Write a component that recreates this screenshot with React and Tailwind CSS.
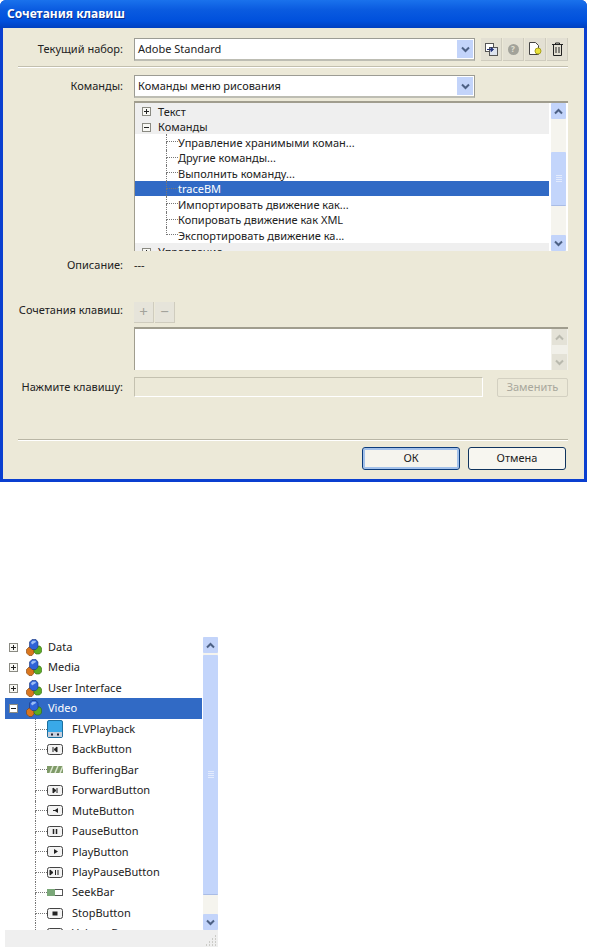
import React from 'react';

const commandRows = ['Управление хранимыми коман...', 'Другие команды...', 'Выполнить команду...', 'traceBM', 'Импортировать движение как...', 'Копировать движение как XML', 'Экспортировать движение ка...'];
const videoRows = ['BackButton', 'BufferingBar', 'ForwardButton', 'MuteButton', 'PauseButton', 'PlayButton', 'PlayPauseButton', 'SeekBar', 'StopButton'];

function Chevron({ up = false, color = '#4d6185' }) {
  return (
    <svg width="9" height="7" viewBox="0 0 9 7" aria-hidden="true">
      <path d={up ? 'M1 5.5 4.5 2 8 5.5' : 'M1 1.5 4.5 5 8 1.5'} fill="none" stroke={color} strokeWidth="2" />
    </svg>
  );
}

function ComboBox({ value, width }) {
  return (
    <div className={`flex h-[23px] items-center justify-between border border-b-2 border-[#9c9c94] border-b-[#bdbdb3] bg-white pl-[3px] pr-px ${width}`}>
      <span className="text-[#222]">{value}</span>
      <span className="flex h-[18px] w-[16px] items-center justify-center bg-[#c3d4fa]">
        <Chevron />
      </span>
    </div>
  );
}

function Scrollbar({ thumbTop, thumbHeight, buttonHeight, width = 'w-[15px]' }) {
  return (
    <div className={`flex h-full shrink-0 flex-col bg-[#f5f4ee] ${width}`}>
      <span className={`flex shrink-0 items-center justify-center rounded-[1px] bg-[#c3d4fa] ${buttonHeight}`}>
        <Chevron up />
      </span>
      <div className={`shrink-0 ${thumbTop}`} />
      <div className={`flex shrink-0 flex-col items-center justify-center gap-px rounded-[1px] border-b border-[#a9bce6] bg-[#c3d5fb] ${thumbHeight}`}>
        <span className="h-px w-[6px] bg-[#e3ebfd]" />
        <span className="h-px w-[6px] bg-[#e3ebfd]" />
        <span className="h-px w-[6px] bg-[#e3ebfd]" />
        <span className="h-px w-[6px] bg-[#e3ebfd]" />
      </div>
      <div className="flex-1" />
      <span className={`flex shrink-0 items-center justify-center rounded-[1px] bg-[#c3d4fa] ${buttonHeight}`}>
        <Chevron />
      </span>
    </div>
  );
}

function Expander({ open = false, inverted = false }) {
  return (
    <svg width="9" height="9" viewBox="0 0 9 9" aria-hidden="true" className="shrink-0">
      <rect x="0.5" y="0.5" width="8" height="8" fill={inverted ? '#fff' : '#f7f7f3'} stroke="#8a8a82" />
      <path d={open ? 'M2 4.5h5' : 'M2 4.5h5M4.5 2v5'} stroke="#222" />
    </svg>
  );
}

// dotted elbow of the tree; last row stops at the middle
function Elbow({ width, last = false }) {
  return (
    <div className={`flex h-full shrink-0 flex-col ${width}`}>
      <div className="flex-1 border-b border-l border-dotted border-[#777]" />
      <div className={`flex-1 border-l border-dotted ${last ? 'border-transparent' : 'border-[#777]'}`} />
    </div>
  );
}

function ClusterIcon() {
  return (
    <svg width="16" height="17" viewBox="0 0 16 17" aria-hidden="true" className="shrink-0">
      <path d="M0.500 10.500 3 8h3l2 2v4l-2 2.500H3L0.500 14z" fill="#d9761e" stroke="#7c3f0d" strokeWidth=".6" />
      <path d="M8 9.500 10.500 7H14l1.500 2v4L13.500 15H10l-2-2z" fill="#5cab23" stroke="#2f6a0e" strokeWidth=".6" />
      <path d="M3.500 3 6 .5h4L12 3v5l-2 2.500H6L3.500 8z" fill="#2f63d8" stroke="#17357e" strokeWidth=".6" />
      <path d="M5 3.500 6.500 1.800h3L10 3 6 5.500z" fill="#9bbcf5" />
    </svg>
  );
}

function FlvIcon() {
  return (
    <svg width="16" height="18" viewBox="0 0 16 18" aria-hidden="true" className="shrink-0">
      <rect x="0.500" y="0.500" width="15" height="17" rx="1.500" fill="#39a9e8" stroke="#1d6f9f" />
      <rect x="1" y="12" width="14" height="5" fill="#c7cfdc" />
      <rect x="4" y="13.500" width="2" height="2" fill="#223" />
      <rect x="10" y="13.500" width="2" height="2" fill="#223" />
    </svg>
  );
}

function WidgetIcon({ name }) {
  const glyph = {
    BackButton: <path d="M6 4v5M10 4 7 6.500 10 9z" stroke="#222" fill="#222" />,
    ForwardButton: <path d="M10 4v5M6 4l3 2.500L6 9z" stroke="#222" fill="#222" />,
    MuteButton: <path d="M6 6h2l3-2v5L8 7H6z" fill="#222" />,
    PauseButton: <path d="M6.500 4v5M9.500 4v5" stroke="#222" strokeWidth="1.500" />,
    PlayButton: <path d="M7 4l4 2.500L7 9z" fill="#222" />,
    PlayPauseButton: <path d="M3 4l3 2.500L3 9zM8.500 4v5M11 4v5" fill="#222" stroke="#222" />,
    StopButton: <rect x="5.500" y="4.500" width="5" height="4" fill="#222" />,
  }[name];
  if (name === 'BufferingBar') {
    return (
      <svg width="16" height="13" viewBox="0 0 16 13" aria-hidden="true" className="shrink-0">
        <rect x="0" y="3" width="16" height="7" fill="#7f9a68" />
        <path d="M3 10 6 3M8 10l3-7M13 10l3-7" stroke="#dbe7d0" strokeWidth="1.500" />
      </svg>
    );
  }
  if (name === 'SeekBar') {
    return (
      <svg width="16" height="13" viewBox="0 0 16 13" aria-hidden="true" className="shrink-0">
        <rect x="0.500" y="3.500" width="15" height="6" fill="#fff" stroke="#555" />
        <rect x="0" y="3" width="8" height="7" fill="#7aa778" />
      </svg>
    );
  }
  return (
    <svg width="16" height="13" viewBox="0 0 16 13" aria-hidden="true" className="shrink-0">
      <rect x="0.500" y="1.500" width="15" height="10" rx="2" fill="#f3f3f3" stroke="#444" />
      {glyph}
    </svg>
  );
}

function ToolButton({ children }) {
  return <span className="flex h-[23px] w-[21px] items-center justify-center bg-[#e3e0d3] border-b border-r border-[#cfccbe]">{children}</span>;
}

function SmallButton({ children }) {
  return <span className="flex h-[21px] w-[20px] items-center justify-center border-b border-r border-[#cfccbe] bg-[#e6e4da] text-[15px] leading-none text-[#a3a39b]">{children}</span>;
}

function FormRow({ label, className = '', labelClass = '', children }) {
  return (
    <div className={`flex items-center ${className}`}>
      <span className={`w-[120px] shrink-0 text-right text-[#222] ${labelClass}`}>{label}</span>
      <div className="ml-[11px] flex min-w-0 flex-1 items-center">{children}</div>
    </div>
  );
}

function ShortcutsDialog() {
  return (
    <div className="w-[587px] overflow-hidden rounded-t-[6px] bg-[#0a3fd0]">
      <div className="flex h-[28px] items-center bg-[linear-gradient(to_bottom,#1a72ec_0%,#0a5be0_35%,#0050dc_75%,#0040c0_100%)] pl-[7px] text-[12px] font-bold text-white [text-shadow:1px_1px_#0a2f90]">
        Сочетания клавиш
      </div>
      <div className="mx-[3px] mb-[3px] bg-[#ece9d8] pb-[9px]">
        <FormRow label="Текущий набор:" className="pt-[10px]">
          <ComboBox value="Adobe Standard" width="w-[341px]" />
          <div className="ml-[6px] flex gap-px">
            <ToolButton>
              <svg width="13" height="13" viewBox="0 0 13 13" aria-hidden="true">
                <rect x="0.500" y="0.500" width="8" height="8" fill="#fff" stroke="#555" />
                <rect x="4.500" y="4.500" width="8" height="8" fill="#dde3ee" stroke="#555" />
                <path d="M2 6.500h6M6 4.500l2.500 2L6 8.500z" stroke="#23327a" fill="#23327a" />
              </svg>
            </ToolButton>
            <ToolButton>
              <span className="flex h-[11px] w-[11px] items-center justify-center rounded-full bg-[#a2a29a] text-[8px] font-bold text-[#e3e0d3]">?</span>
            </ToolButton>
            <ToolButton>
              <svg width="14" height="14" viewBox="0 0 14 14" aria-hidden="true">
                <path d="M1.500.5h6l3 3v9h-9z" fill="#fff" stroke="#444" />
                <circle cx="10" cy="9" r="3" fill="#e9e23a" stroke="#a9a21d" />
              </svg>
            </ToolButton>
            <ToolButton>
              <svg width="13" height="14" viewBox="0 0 13 14" aria-hidden="true">
                <path d="M1 2.500h11M4.500 2.500V1h4v1.500M2.500 2.500v11h8v-11M5 5v6M8 5v6" fill="none" stroke="#222" />
              </svg>
            </ToolButton>
          </div>
        </FormRow>

        <div className="ml-[15px] mt-[5px] h-[2px] w-[550px] border-b border-t border-b-white border-t-[#c2bfae]" />

        <FormRow label="Команды:" className="mt-[7px]">
          <ComboBox value="Команды меню рисования" width="w-[341px]" />
        </FormRow>

        <div className="ml-[131px] mt-[3px] flex h-[150px] w-[434px] border-l border-t-2 border-[#a09d8e] bg-white">
          <div className="min-w-0 flex-1 overflow-hidden">
            <div className="flex h-[15.5px] items-center gap-[7px] bg-[#efefef] pl-[7px] pt-[2px] text-[#222]"><Expander />Текст</div>
            <div className="flex h-[15.5px] items-center gap-[7px] bg-[#efefef] pl-[7px] pt-[2px] text-[#222]"><Expander open />Команды</div>
            {commandRows.map((row, i) => (
              <div key={row} className={`flex h-[15.5px] items-center pl-[31px] ${row === 'traceBM' ? 'bg-[#316ac5] text-white' : 'text-[#222]'}`}>
                <Elbow width="w-[12px]" last={i === commandRows.length - 1} />
                <span className="pt-[2px]">{row}</span>
              </div>
            ))}
            <div className="flex h-[15.5px] items-center gap-[7px] bg-[#efefef] pl-[7px] pt-[4px] text-[#222]"><Expander />Управление</div>
          </div>
          <div className="w-[2px] shrink-0" />
          <Scrollbar thumbTop="h-[33px]" thumbHeight="h-[54px]" buttonHeight="h-[16px]" />
          <div className="w-[2px] shrink-0" />
        </div>

        <FormRow label="Описание:" className="mt-[6px] h-[16px]">
          <span className="text-[#222]">---</span>
        </FormRow>

        <FormRow label="Сочетания клавиш:" labelClass="pb-[4px]" className="mt-[28px] h-[22px]">
          <div className="flex gap-px">
            <SmallButton>+</SmallButton>
            <SmallButton>−</SmallButton>
          </div>
        </FormRow>

        <div className="ml-[131px] mt-[4px] flex h-[43px] w-[434px] justify-end border-l border-t-2 border-[#a09d8e] bg-white">
          <div className="flex h-full w-[17px] flex-col justify-between bg-[#f1f0e9] px-px">
            <span className="flex h-[16px] items-center justify-center bg-[#e4e2d7]"><Chevron up color="#b9b9ae" /></span>
            <span className="flex h-[16px] items-center justify-center bg-[#e4e2d7]"><Chevron color="#b9b9ae" /></span>
          </div>
        </div>

        <FormRow label="Нажмите клавишу:" className="mt-[7px] h-[20px]">
          <div className="h-[20px] w-[349px] border border-[#c4c1b0] border-b-white border-r-white" />
          <span className="ml-[14px] flex h-[19px] w-[71px] items-center justify-center rounded-[2px] border border-[#d3d0c1] text-[#a8a79c]">Заменить</span>
        </FormRow>

        <div className="ml-[15px] mt-[42px] h-[2px] w-[550px] border-b border-t border-b-white border-t-[#b9b6a5]" />

        <div className="mt-[6px] flex justify-end gap-[8px] pr-[18px]">
          <button className="h-[23px] w-[98px] rounded-[3px] border border-[#0c3c7c] bg-[#f5f4ee] text-[#222] shadow-[inset_0_0_0_2px_#a3c1ea]">ОК</button>
          <button className="h-[23px] w-[98px] rounded-[3px] border border-[#10345e] bg-[#f7f6f0] text-[#222]">Отмена</button>
        </div>
      </div>
    </div>
  );
}

function ComponentsTree() {
  return (
    <div className="ml-[5px] mt-[155px] w-[213px]">
      <div className="flex h-[293px]">
        <div className="w-[197px] overflow-hidden">
          {['Data', 'Media', 'User Interface'].map((name) => (
            <div key={name} className="flex h-[20.46px] items-center pl-[4px] text-[#222]">
              <Expander />
              <span className="ml-[8px] flex items-center gap-[6px]"><ClusterIcon />{name}</span>
            </div>
          ))}
          <div className="flex h-[20.46px] items-center bg-[#316ac5] pl-[4px] text-white">
            <Expander open inverted />
            <span className="ml-[8px] flex items-center gap-[6px]"><ClusterIcon />Video</span>
          </div>
          <div className="flex h-[20.46px] items-center pl-[30px] text-[#222]">
            <Elbow width="w-[12px]" />
            <FlvIcon />
            <span className="ml-[9px]">FLVPlayback</span>
          </div>
          {videoRows.map((name) => (
            <div key={name} className="flex h-[20.46px] items-center pl-[30px] text-[#222]">
              <Elbow width="w-[12px]" />
              <WidgetIcon name={name} />
              <span className="ml-[9px]">{name}</span>
            </div>
          ))}
          <div className="flex h-[20.46px] items-center pl-[30px] text-[#222]">
            <Elbow width="w-[12px]" />
            <WidgetIcon name="VolumeBar" />
            <span className="ml-[9px]">VolumeBar</span>
          </div>
        </div>
        <div className="w-px shrink-0" />
        <Scrollbar thumbTop="h-[2px]" thumbHeight="h-[240px]" buttonHeight="h-[16px]" />
      </div>
      <div className="flex h-[17px] items-end justify-end bg-[#efefef] pb-px pr-px">
        <svg width="11" height="11" viewBox="0 0 11 11" aria-hidden="true">
          <path d="M9 1h1M6 4h1M9 4h1M3 7h1M6 7h1M9 7h1M0 10h1M3 10h1M6 10h1M9 10h1" stroke="#a8a8a0" />
        </svg>
      </div>
    </div>
  );
}

export default function App() {
  return (
    <div className="h-[947px] w-[590px] overflow-hidden bg-white font-['Noto_Sans',sans-serif] text-[11px]">
      <ShortcutsDialog />
      <ComponentsTree />
    </div>
  );
}
